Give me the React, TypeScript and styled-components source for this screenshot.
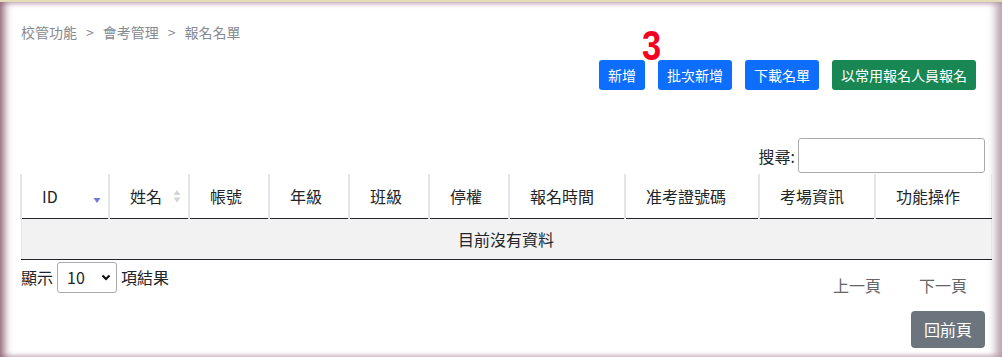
import React from "react";
import styled, { createGlobalStyle } from "styled-components";

const Global = createGlobalStyle`
  html, body { margin: 0; padding: 0; background: #fff; }
  body {
    font-family: "Noto Sans CJK TC", "Noto Sans", sans-serif;
    color: #212529;
  }
  * { box-sizing: border-box; }
`;

const Frame = styled.div`
  position: relative;
  width: 1002px;
  height: 357px;
  overflow: hidden;
  background: #fff;
  border-top: 2px solid #e4dcb6;
  box-shadow:
    inset 9px 0 8px -5px #8d5f70,
    inset -12px 0 9px -6px #b8a0ad,
    inset 0 5px 5px -3px #cdb6c6,
    inset 0 -5px 4px -3px #d6c4d0;
  padding: 20px 12px 0 20px;
`;

const Breadcrumb = styled.nav`
  font-size: 14px;
  line-height: 20px;
  color: #858a90;
  display: flex;
  gap: 9px;
  padding-left: 1px;
`;

const Annotation = styled.span`
  position: absolute;
  left: 642px;
  top: 23px;
  font-family: "Liberation Sans", "DejaVu Sans", sans-serif;
  font-weight: 700;
  font-size: 42px;
  line-height: 42px;
  color: #f5001f;
  transform: scaleX(0.82);
  transform-origin: left top;
`;

const Toolbar = styled.div`
  display: flex;
  justify-content: flex-end;
  gap: 13px;
  margin-top: 18px;
  margin-right: 14px;
`;

const Button = styled.button<{ $tone: "primary" | "success" | "secondary" }>`
  font-family: "Noto Sans CJK TC", sans-serif;
  font-size: 14px;
  line-height: 1;
  height: 30px;
  padding: 0 9px;
  border: none;
  border-radius: 3px;
  color: #fff;
  background: ${(p) =>
    p.$tone === "primary" ? "#0d6efd" : p.$tone === "success" ? "#198754" : "#6c757d"};
`;

const SearchRow = styled.div`
  display: flex;
  justify-content: flex-end;
  align-items: center;
  margin-top: 48px;
  margin-right: 5px;
  font-size: 16px;
`;

const SearchLabel = styled.label`
  margin-right: 3px;
  line-height: 20px;
`;

const SearchInput = styled.input`
  width: 187px;
  height: 35px;
  border: 1px solid #aaa;
  border-radius: 3px;
  background: #fff;
`;

const Table = styled.table`
  width: 970px;
  margin-top: 1px;
  border-collapse: collapse;
  table-layout: fixed;
  font-size: 16px;
`;

const Th = styled.th<{ $w: number }>`
  width: ${(p) => p.$w}px;
  height: 44px;
  padding: 0 7px 0 20px;
  font-weight: 400;
  text-align: left;
  border-left: 2px solid #e2e5e9;
  border-bottom: 1px solid #212529;
  &:last-child { border-right: 1px solid #e2e5e9; }
`;

const ThInner = styled.div`
  display: flex;
  align-items: center;
  justify-content: space-between;
  line-height: 20px;
`;

const EmptyCell = styled.td`
  height: 41px;
  background: #f2f2f2;
  text-align: center;
  border-left: 1px solid #e2e5e9;
  border-right: 1px solid #e2e5e9;
  border-bottom: 1px solid #212529;
  line-height: 20px;
`;

const Footer = styled.div`
  display: flex;
  justify-content: space-between;
  align-items: flex-start;
  font-size: 16px;
`;

const Length = styled.div`
  display: flex;
  align-items: center;
  gap: 4px;
  margin-top: 2px;
  padding-left: 1px;
  line-height: 20px;
`;

const SelectWrap = styled.span`
  position: relative;
  display: inline-flex;
`;

const Select = styled.select`
  appearance: none;
  width: 60px;
  height: 31px;
  padding: 0 0 0 9px;
  border: 1px solid #aaa;
  border-radius: 3px;
  background: #fff;
  font-family: "Noto Sans CJK TC", sans-serif;
  font-size: 16px;
  color: #212529;
`;

const Chevron = styled.svg`
  position: absolute;
  right: 6px;
  top: 12px;
  pointer-events: none;
`;

const Pager = styled.div`
  display: flex;
  flex-direction: column;
  align-items: flex-end;
`;

const PagerLinks = styled.div`
  display: flex;
  padding-top: 15px;
  margin-right: 4px;
`;

const PageLink = styled.span`
  padding: 0 19px;
  color: #666;
  line-height: 20px;
`;

const BackButton = styled(Button)`
  font-size: 16px;
  height: 37px;
  padding: 0 13px;
  border-radius: 4px;
  margin-top: 16px;
  margin-right: 5px;
`;

const cols: { label: string; w: number; sort?: "desc" | "both" }[] = [
  { label: "ID", w: 88, sort: "desc" },
  { label: "姓名", w: 80, sort: "both" },
  { label: "帳號", w: 80 },
  { label: "年級", w: 80 },
  { label: "班級", w: 80 },
  { label: "停權", w: 80 },
  { label: "報名時間", w: 116 },
  { label: "准考證號碼", w: 134 },
  { label: "考場資訊", w: 116 },
  { label: "功能操作", w: 116 },
];

function SortIcon({ kind }: { kind: "desc" | "both" }) {
  if (kind === "desc") {
    return (
      <svg width="8" height="20" viewBox="0 0 8 20">
        <polygon points="0.5,12 7.5,12 4,17" fill="#7377d9" />
      </svg>
    );
  }
  return (
    <svg width="8" height="20" viewBox="0 0 8 20">
      <polygon points="0.5,9 7.5,9 4,4" fill="#d2d4d8" />
      <polygon points="0.5,11.5 7.5,11.5 4,16.5" fill="#d2d4d8" />
    </svg>
  );
}

export default function App() {
  return (
    <>
      <Global />
      <Frame>
        <Breadcrumb>
          <span>校管功能</span>
          <span>&gt;</span>
          <span>會考管理</span>
          <span>&gt;</span>
          <span>報名名單</span>
        </Breadcrumb>
        <Annotation>3</Annotation>
        <Toolbar>
          <Button $tone="primary">新增</Button>
          <Button $tone="primary">批次新增</Button>
          <Button $tone="primary">下載名單</Button>
          <Button $tone="success">以常用報名人員報名</Button>
        </Toolbar>
        <SearchRow>
          <SearchLabel>搜尋:</SearchLabel>
          <SearchInput type="search" />
        </SearchRow>
        <Table>
          <thead>
            <tr>
              {cols.map((c) => (
                <Th key={c.label} $w={c.w}>
                  <ThInner>
                    <span>{c.label}</span>
                    {c.sort && <SortIcon kind={c.sort} />}
                  </ThInner>
                </Th>
              ))}
            </tr>
          </thead>
          <tbody>
            <tr>
              <EmptyCell colSpan={10}>目前沒有資料</EmptyCell>
            </tr>
          </tbody>
        </Table>
        <Footer>
          <Length>
            <span>顯示</span>
            <SelectWrap>
              <Select defaultValue="10">
                <option value="10">10</option>
                <option value="25">25</option>
                <option value="50">50</option>
                <option value="100">100</option>
              </Select>
              <Chevron width="10" height="7" viewBox="0 0 10 7">
                <polyline points="1.5,1.5 5,5 8.5,1.5" fill="none" stroke="#111" strokeWidth="2.2" />
              </Chevron>
            </SelectWrap>
            <span>項結果</span>
          </Length>
          <Pager>
            <PagerLinks>
              <PageLink>上一頁</PageLink>
              <PageLink>下一頁</PageLink>
            </PagerLinks>
            <BackButton $tone="secondary">回前頁</BackButton>
          </Pager>
        </Footer>
      </Frame>
    </>
  );
}
